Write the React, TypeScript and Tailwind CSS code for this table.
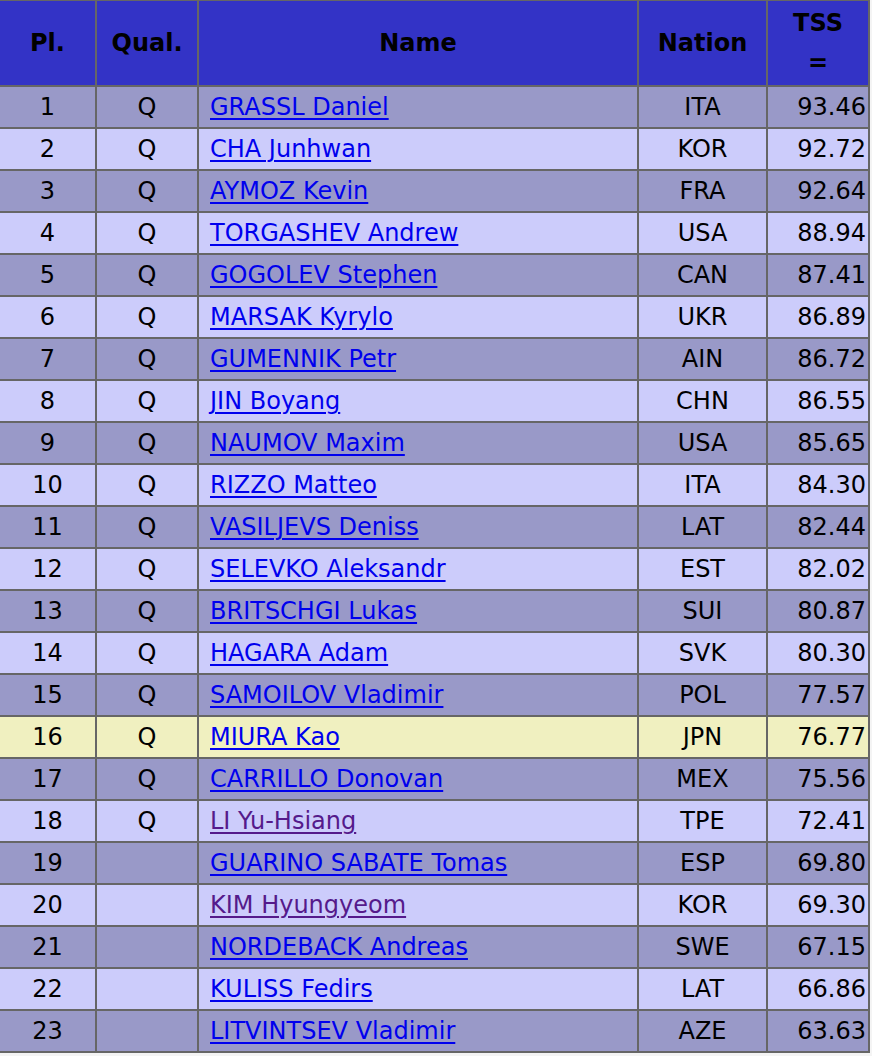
import React from 'react';

type Row = { pl: number; q: boolean; name: string; nat: string; tss: string; visited?: boolean; hl?: boolean };

const ROWS: Row[] = [
  { pl: 1, q: true, name: 'GRASSL Daniel', nat: 'ITA', tss: '93.46' },
  { pl: 2, q: true, name: 'CHA Junhwan', nat: 'KOR', tss: '92.72' },
  { pl: 3, q: true, name: 'AYMOZ Kevin', nat: 'FRA', tss: '92.64' },
  { pl: 4, q: true, name: 'TORGASHEV Andrew', nat: 'USA', tss: '88.94' },
  { pl: 5, q: true, name: 'GOGOLEV Stephen', nat: 'CAN', tss: '87.41' },
  { pl: 6, q: true, name: 'MARSAK Kyrylo', nat: 'UKR', tss: '86.89' },
  { pl: 7, q: true, name: 'GUMENNIK Petr', nat: 'AIN', tss: '86.72' },
  { pl: 8, q: true, name: 'JIN Boyang', nat: 'CHN', tss: '86.55' },
  { pl: 9, q: true, name: 'NAUMOV Maxim', nat: 'USA', tss: '85.65' },
  { pl: 10, q: true, name: 'RIZZO Matteo', nat: 'ITA', tss: '84.30' },
  { pl: 11, q: true, name: 'VASILJEVS Deniss', nat: 'LAT', tss: '82.44' },
  { pl: 12, q: true, name: 'SELEVKO Aleksandr', nat: 'EST', tss: '82.02' },
  { pl: 13, q: true, name: 'BRITSCHGI Lukas', nat: 'SUI', tss: '80.87' },
  { pl: 14, q: true, name: 'HAGARA Adam', nat: 'SVK', tss: '80.30' },
  { pl: 15, q: true, name: 'SAMOILOV Vladimir', nat: 'POL', tss: '77.57' },
  { pl: 16, q: true, name: 'MIURA Kao', nat: 'JPN', tss: '76.77', hl: true },
  { pl: 17, q: true, name: 'CARRILLO Donovan', nat: 'MEX', tss: '75.56' },
  { pl: 18, q: true, name: 'LI Yu-Hsiang', nat: 'TPE', tss: '72.41', visited: true },
  { pl: 19, q: false, name: 'GUARINO SABATE Tomas', nat: 'ESP', tss: '69.80' },
  { pl: 20, q: false, name: 'KIM Hyungyeom', nat: 'KOR', tss: '69.30', visited: true },
  { pl: 21, q: false, name: 'NORDEBACK Andreas', nat: 'SWE', tss: '67.15' },
  { pl: 22, q: false, name: 'KULISS Fedirs', nat: 'LAT', tss: '66.86' },
  { pl: 23, q: false, name: 'LITVINTSEV Vladimir', nat: 'AZE', tss: '63.63' },
];

export default function App() {
  return (
    <div className="min-h-screen bg-[#f4f4f4] overflow-hidden font-['DejaVu_Sans',Verdana,sans-serif] text-[24px] text-black">
      <table className="w-[872px] -ml-[2px] -mt-[1px] border-separate border-spacing-[2px] bg-[#666666] table-fixed">
        <colgroup>
          <col className="w-[95px]" />
          <col className="w-[100px]" />
          <col className="w-[438px]" />
          <col className="w-[127px]" />
          <col className="w-[100px]" />
        </colgroup>
        <thead>
          <tr className="bg-[#3333c6] font-bold h-[84px]">
            <th className="p-0 text-center">Pl.</th>
            <th className="p-0 text-center">Qual.</th>
            <th className="p-0 text-center">Name</th>
            <th className="p-0 text-center">Nation</th>
            <th className="p-0 text-center">
              <div className="flex flex-col items-center leading-[40px]">
                <span>TSS</span>
                <span>=</span>
              </div>
            </th>
          </tr>
        </thead>
        <tbody>
          {ROWS.map((r, i) => (
            <tr
              key={r.pl}
              className={`h-[40px] ${r.hl ? 'bg-[#f0f0c0]' : i % 2 === 0 ? 'bg-[#9999c8]' : 'bg-[#ccccfb]'}`}
            >
              <td className="p-0 text-center">{r.pl}</td>
              <td className="p-0 text-center">{r.q ? 'Q' : ''}</td>
              <td className="p-0 pl-[11px] text-left whitespace-nowrap">
                <a
                  href="#"
                  className={`underline underline-offset-[3px] decoration-[1.5px] ${r.visited ? 'text-[#551a8b]' : 'text-[#0000ee]'}`}
                >
                  {r.name}
                </a>
              </td>
              <td className="p-0 text-center">{r.nat}</td>
              <td className="p-0 pr-[2px] text-right">{r.tss}</td>
            </tr>
          ))}
        </tbody>
      </table>
    </div>
  );
}
